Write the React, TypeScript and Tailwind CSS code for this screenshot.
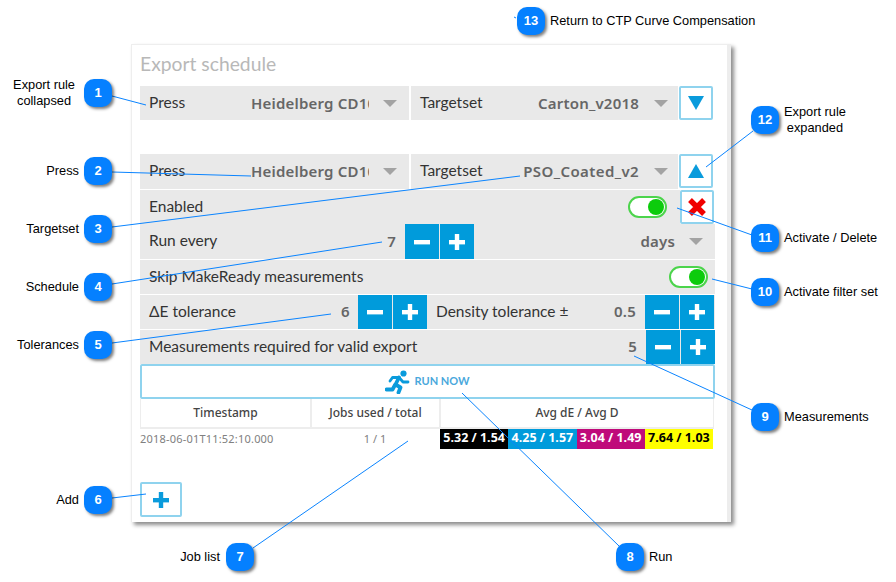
import type { ReactNode } from "react";

const lato = "font-['Lato',sans-serif]";
const val = "font-['Noto_Sans',sans-serif] font-semibold text-[#666666] text-[15px] tracking-[0.2px]";

function Label({ children, className = "" }: { children: ReactNode; className?: string }) {
  return <span className={`pb-[1px] text-[15.5px] text-[#333333] ${className}`}>{children}</span>;
}

function Caret() {
  return <span className="ml-[14px] h-0 w-0 shrink-0 border-x-[7.5px] border-t-[7px] border-x-transparent border-t-[#a3a3a3]" />;
}

function SelectCell({ label, value, w, valueClass, pr }: { label: string; value: string; w: string; valueClass: string; pr: string }) {
  return (
    <div className={`flex h-full items-center justify-between bg-[#e9e9e9] pl-[9px] ${pr} ${w}`}>
      <Label>{label}</Label>
      <span className="flex items-center">
        <span className={`overflow-hidden whitespace-nowrap text-right ${val} ${valueClass}`}>{value}</span>
        <Caret />
      </span>
    </div>
  );
}

function Tri({ up }: { up?: boolean }) {
  return (
    <svg width="16" height="14" viewBox="0 0 16 14">
      <polygon points={up ? "0,14 16,14 8,0" : "0,0 16,0 8,14"} fill="#0a9bdc" />
    </svg>
  );
}

function OutlineBtn({ children }: { children: ReactNode }) {
  return (
    <div className="flex h-[34px] w-[34px] shrink-0 items-center justify-center rounded-[2px] border-2 border-[#8fd3ee] bg-white">
      {children}
    </div>
  );
}

function Stepper() {
  return (
    <div className="flex h-full shrink-0 gap-px">
      {["minus", "plus"].map((k) => (
        <div key={k} className="flex h-full w-[34px] items-center justify-center bg-[#009bdb]">
          <svg width="18" height="18" viewBox="0 0 18 18">
            <rect x="1" y="7" width="16" height="4.4" fill="#fff" />
            {k === "plus" && <rect x="6.8" y="1" width="4.4" height="16" fill="#fff" />}
          </svg>
        </div>
      ))}
    </div>
  );
}

function Toggle() {
  return (
    <div className="flex h-[22px] w-[39px] items-center justify-end rounded-full border-2 border-[#4cd44c] bg-white pr-[1px]">
      <div className="h-[16px] w-[16px] rounded-full bg-[#0ccc0c]" />
    </div>
  );
}

function Runner() {
  return (
    <svg width="25" height="24" viewBox="0 0 25 24" fill="none" stroke="#0a9bdc" strokeWidth="3.8" strokeLinejoin="round" strokeLinecap="round">
      <circle cx="18.5" cy="3.5" r="3.1" fill="#0a9bdc" stroke="none" />
      <path d="M14 7.5 L7.5 7.5 L5 11" strokeWidth="2.8" />
      <path d="M14 7.5 L10.5 14.5 L15.5 17.5 L13.5 22.5" />
      <path d="M14.5 8 L18 12 L23 12" strokeWidth="2.8" />
      <path d="M10 15 L7.5 19.5 L1.5 19.5" />
    </svg>
  );
}

const callouts: { n: number; x: number; y: number }[] = [
  { n: 1, x: 98, y: 93 },
  { n: 2, x: 98, y: 171 },
  { n: 3, x: 98, y: 229 },
  { n: 4, x: 98, y: 287 },
  { n: 5, x: 98, y: 345 },
  { n: 6, x: 98, y: 500 },
  { n: 7, x: 240, y: 557 },
  { n: 8, x: 630, y: 557 },
  { n: 9, x: 765, y: 417 },
  { n: 10, x: 765, y: 292 },
  { n: 11, x: 765, y: 238 },
  { n: 12, x: 765, y: 120 },
  { n: 13, x: 531, y: 21 },
];

const lines = [
  [112, 96, 146, 105],
  [112, 172, 251, 176],
  [112, 227, 520, 176],
  [112, 284, 382, 242],
  [112, 343, 331, 314],
  [112, 498, 146, 494],
  [253, 548, 408, 441],
  [619, 546, 462, 393],
  [752, 410, 634, 356],
  [752, 289, 712, 279],
  [752, 235, 677, 208],
  [753, 131, 706, 167],
  [516, 18, 514, 17],
];

const labels: { text: string; right?: number; left?: number; y: number; center?: boolean }[] = [
  { text: "Export rule\ncollapsed", right: 821, y: 77, center: true },
  { text: "Press", right: 817, y: 163 },
  { text: "Targetset", right: 817, y: 221 },
  { text: "Schedule", right: 817, y: 279 },
  { text: "Tolerances", right: 817, y: 337 },
  { text: "Add", right: 817, y: 492 },
  { text: "Job list", right: 676, y: 549 },
  { text: "Run", left: 649, y: 549 },
  { text: "Measurements", left: 784, y: 409 },
  { text: "Activate filter set", left: 784, y: 284 },
  { text: "Activate / Delete", left: 784, y: 230 },
  { text: "Export rule\nexpanded", left: 784, y: 104, center: true },
  { text: "Return to CTP Curve Compensation", left: 550, y: 13 },
];

export default function App() {
  return (
    <div className="relative h-[582px] w-[896px] overflow-hidden bg-white pl-[131px] pt-[44px]">
      <div className={`h-[478px] w-[600px] border-t border-l border-r-4 border-t-[#eeeeee] border-l-[#eeeeee] border-r-[#ededed] bg-white pl-[8px] shadow-[3px_3px_4px_rgba(0,0,0,0.45)] ${lato}`}>
        <div className="flex h-[41px] items-center pb-[3px] text-[19.3px] text-[#b8b8b8]">Export schedule</div>

        <div className="flex h-[34px] gap-[2px]">
          <SelectCell label="Press" value="Heidelberg CD102" w="w-[269px]" valueClass="-ml-[1px] w-[118px] tracking-[-0.55px]" pr="pr-[12px]" />
          <SelectCell label="Targetset" value="Carton_v2018" w="w-[267px]" valueClass="mr-[1px] w-[110px]" pr="pr-[10px]" />
          <div className="-ml-[1px]"><OutlineBtn><Tri /></OutlineBtn></div>
        </div>

        <div className="mt-[34px] flex h-[35px] gap-[2px]">
          <SelectCell label="Press" value="Heidelberg CD102" w="w-[269px]" valueClass="-ml-[1px] w-[118px] tracking-[-0.55px]" pr="pr-[12px]" />
          <SelectCell label="Targetset" value="PSO_Coated_v2" w="w-[267px]" valueClass="mr-[1px] w-[125px] tracking-[0.4px]" pr="pr-[10px]" />
          <div className="-ml-[1px]"><OutlineBtn><Tri up /></OutlineBtn></div>
        </div>

        <div className="flex h-[35px] w-[574px] pt-[1px]">
          <div className="flex flex-1 items-center justify-between bg-[#e9e9e9] pl-[9px] pr-[13px]">
            <Label>Enabled</Label>
            <Toggle />
          </div>
          <OutlineBtn>
            <svg width="20" height="20" viewBox="0 0 20 20">
              <path d="M3 3 L17 17 M17 3 L3 17" stroke="#f00000" strokeWidth="5.4" />
            </svg>
          </OutlineBtn>
        </div>

        <div className="flex h-[35px] w-[575px] items-center bg-[#e9e9e9] pl-[9px]">
          <Label className="flex-1">Run every</Label>
          <span className={`mr-[9px] ${val}`}>7</span>
          <Stepper />
          <span className="flex w-[241px] items-center justify-end pr-[12px]">
            <span className={val}>days</span>
            <Caret />
          </span>
        </div>

        <div className="mt-[1px] flex h-[34px] w-[575px] items-center justify-between bg-[#e9e9e9] pl-[9px] pr-[7px]">
          <Label>Skip MakeReady measurements</Label>
          <Toggle />
        </div>

        <div className="mt-[1px] flex h-[34px] w-[575px] items-center bg-[#e9e9e9] pl-[9px] pr-[1px]">
          <Label className="w-[192px]">ΔE tolerance</Label>
          <span className={`w-[17px] pb-[1px] ${val}`}>6</span>
          <Stepper />
          <Label className="ml-[9px] flex-1">Density tolerance ±</Label>
          <span className={`mr-[9px] pb-[1px] ${val}`}>0.5</span>
          <Stepper />
        </div>

        <div className="mt-[1px] flex h-[34px] w-[575px] items-center bg-[#e9e9e9] pl-[9px]">
          <Label className="flex-1">Measurements required for valid export</Label>
          <span className={`mr-[9px] pb-[1px] ${val}`}>5</span>
          <Stepper />
        </div>

        <div className="flex h-[35px] w-[575px] items-center justify-center gap-[4px] rounded-[2px] border-2 border-[#8fd3ee] bg-white">
          <Runner />
          <span className={`text-[11px] font-bold text-[#4aa8dc] ${lato}`}>RUN NOW</span>
        </div>

        <div className="flex h-[30px] w-[574px] items-center border-b-2 border-x border-[#ededed] font-['Noto_Sans',sans-serif] text-[12px] font-medium text-[#444444]">
          <span className="flex h-full w-[171px] items-center justify-center border-r-2 border-[#ededed]">Timestamp</span>
          <span className="flex h-full w-[129px] items-center justify-center border-r-2 border-[#ededed]">Jobs used / total</span>
          <span className="flex flex-1 justify-center">Avg dE / Avg D</span>
        </div>

        <div className="flex h-[20px] w-[573px] items-center font-['Noto_Sans',sans-serif]">
          <span className="w-[170px] whitespace-nowrap text-[11px] tracking-[0.2px] text-[#808080]">2018-06-01T11:52:10.000</span>
          <span className="w-[130px] text-center text-[11px] text-[#808080]">1 / 1</span>
          <div className="flex h-full flex-1 text-center text-[12.5px] font-bold">
            <span className="flex-1 whitespace-nowrap bg-black text-white">5.32 / 1.54</span>
            <span className="flex-1 whitespace-nowrap bg-[#009bdb] text-white">4.25 / 1.57</span>
            <span className="flex-1 whitespace-nowrap bg-[#bf0a7a] text-white">3.04 / 1.49</span>
            <span className="flex-1 whitespace-nowrap bg-[#ffff00] text-black">7.64 / 1.03</span>
          </div>
        </div>

        <div className="mt-[33px] flex h-[35px] w-[42px] items-center justify-center rounded-[2px] border-2 border-[#8fd3ee] bg-white">
          <svg width="18" height="18" viewBox="0 0 18 18">
            <rect x="1" y="7" width="16" height="4.4" fill="#0a9bdc" />
            <rect x="6.8" y="1" width="4.4" height="16" fill="#0a9bdc" />
          </svg>
        </div>
      </div>

      <svg className="pointer-events-none absolute inset-0" width="896" height="582">
        {lines.map((l, i) => (
          <line key={i} x1={l[0]} y1={l[1]} x2={l[2]} y2={l[3]} stroke="#0a84ff" strokeWidth="1" />
        ))}
      </svg>

      {callouts.map((c) => (
        <div
          key={c.n}
          style={{ left: c.x - 14, top: c.y - 14 }}
          className="absolute flex h-[28px] w-[28px] items-center justify-center rounded-[10px] bg-[#0580ff] font-['Liberation_Sans',sans-serif] text-[13px] font-bold text-white shadow-[2px_2px_3px_rgba(0,0,0,0.5)]"
        >
          {c.n}
        </div>
      ))}

      {labels.map((l) => (
        <div
          key={l.text + l.y}
          style={l.left !== undefined ? { left: l.left, top: l.y } : { right: l.right, top: l.y }}
          className={`absolute whitespace-pre font-['Liberation_Sans',sans-serif] text-[12.8px] leading-[16px] text-black ${l.center ? "text-center" : ""}`}
        >
          {l.text}
        </div>
      ))}
    </div>
  );
}
